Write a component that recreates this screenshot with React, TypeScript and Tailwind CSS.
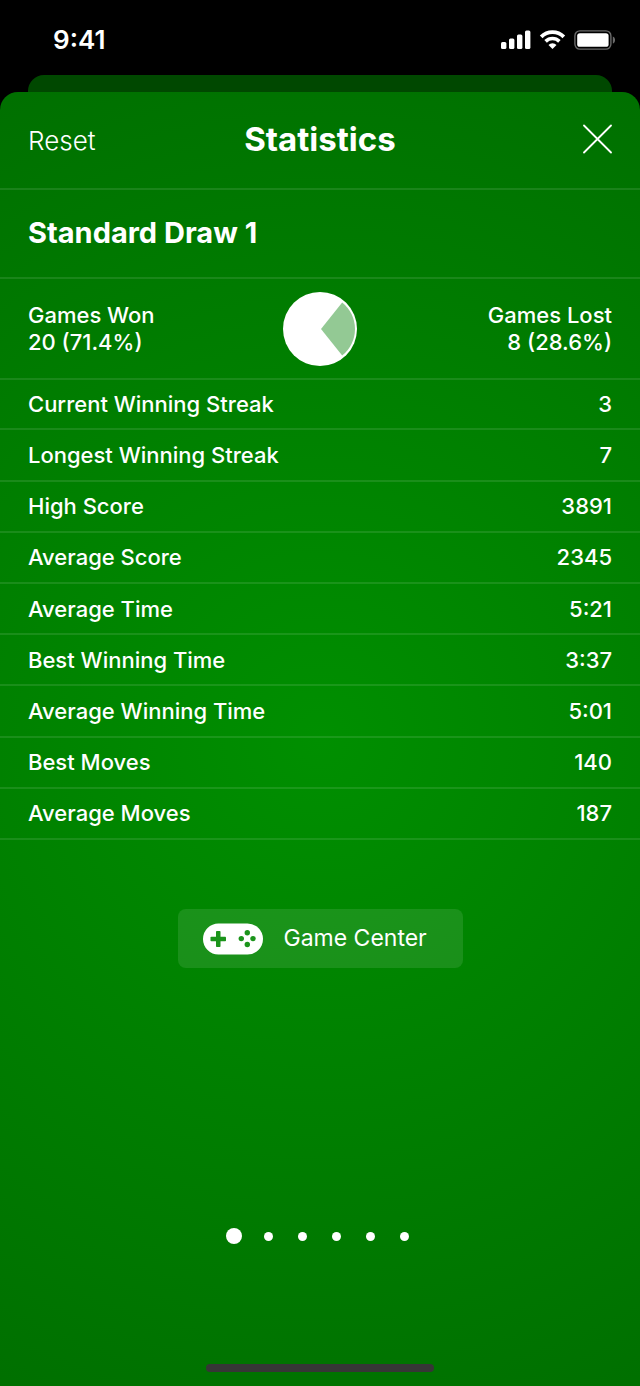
import React, { useState } from 'react';

interface StatRow {
  label: string;
  value: string;
}

const STATS: StatRow[] = [
  { label: 'Current Winning Streak', value: '3' },
  { label: 'Longest Winning Streak', value: '7' },
  { label: 'High Score', value: '3891' },
  { label: 'Average Score', value: '2345' },
  { label: 'Average Time', value: '5:21' },
  { label: 'Best Winning Time', value: '3:37' },
  { label: 'Average Winning Time', value: '5:01' },
  { label: 'Best Moves', value: '140' },
  { label: 'Average Moves', value: '187' },
];

const PAGES = 6;

const StatusBar: React.FC = () => (
  <div className="flex items-center justify-between h-[75px] pl-[53px] pr-[25px] pt-1">
    <span className="text-[26px] leading-8 font-semibold">9:41</span>
    <div className="flex items-center gap-2">
      <svg width="30" height="20" viewBox="0 0 30 20" fill="currentColor" aria-label="Signal">
        <rect x="0" y="12" width="5.4" height="7" rx="1.5" />
        <rect x="8" y="8.5" width="5.4" height="10.5" rx="1.5" />
        <rect x="16" y="4.5" width="5.4" height="14.5" rx="1.5" />
        <rect x="24" y="0.5" width="5.4" height="18.5" rx="1.5" />
      </svg>
      <svg width="27" height="20" viewBox="0 0 27 20" aria-label="Wi-Fi">
        <path d="M2.2 6.8a16 16 0 0 1 22.6 0" fill="none" stroke="currentColor" strokeWidth="3.8" />
        <path d="M6.6 11.4a9.8 9.8 0 0 1 13.8 0" fill="none" stroke="currentColor" strokeWidth="3.6" />
        <path d="M13.5 19l-4-4a5.7 5.7 0 0 1 8 0z" fill="currentColor" />
      </svg>
      <svg width="41" height="20" viewBox="0 0 41 20" aria-label="Battery">
        <rect x="0.9" y="0.9" width="36" height="18.2" rx="5" fill="none" stroke="#6a6a6a" strokeWidth="1.4" />
        <rect x="3.2" y="3.2" width="31.4" height="13.6" rx="2.6" fill="currentColor" />
        <path d="M38.8 6.5c3 1 3 6 0 7z" fill="#6a6a6a" />
      </svg>
    </div>
  </div>
);

const PieChart: React.FC<{ lost: number }> = ({ lost }) => {
  const half = lost * Math.PI;
  const dx = 34 * Math.cos(half);
  const dy = 34 * Math.sin(half);
  return (
    <svg className="shrink-0" width="74" height="74" viewBox="0 0 74 74" role="img" aria-label="Games won and lost">
      <circle cx="37" cy="37" r="37" fill="#fff" />
      <path d={`M38 37L${38 + dx} ${37 - dy}A34 34 0 0 1 ${38 + dx} ${37 + dy}Z`} fill="#93c994" />
    </svg>
  );
};

const GamepadIcon: React.FC = () => (
  <svg width="60" height="32" viewBox="0 0 60 32" aria-hidden="true">
    <rect x="0" y="0.5" width="60" height="31" rx="15.5" fill="#fff" />
    <g fill="#1b941b">
      <rect x="13" y="8" width="4.5" height="16" rx="0.8" />
      <rect x="7.5" y="13.8" width="15.5" height="4.5" rx="0.8" />
      <circle cx="44.3" cy="9.7" r="2.7" />
      <circle cx="44.3" cy="21.5" r="2.7" />
      <circle cx="38.3" cy="15.6" r="2.7" />
      <circle cx="50" cy="15.6" r="2.7" />
    </g>
  </svg>
);

const App: React.FC = () => {
  const [page, setPage] = useState(0);

  return (
    <div className="min-h-screen flex flex-col bg-black text-white font-['Inter','Liberation_Sans',sans-serif]">
      <StatusBar />
      <div className="h-[17px] mx-7 rounded-t-2xl bg-[#004800]" />

      <main className="flex-1 flex flex-col rounded-t-[18px] bg-[radial-gradient(circle_at_50%_50%,#008f00,#006e00_760px)]">
        <header className="grid grid-cols-3 items-center px-7 pt-[27px] pb-[29px] border-b-2 border-white/10">
          <button className="justify-self-start pt-1 text-[26px] leading-9 font-light">Reset</button>
          <h1 className="text-center text-[33px] leading-10 font-bold">Statistics</h1>
          <button className="justify-self-end" aria-label="Close">
            <svg width="29" height="30" viewBox="0 0 29 30" stroke="currentColor" strokeWidth="1.8" strokeLinecap="round">
              <path d="M1 1.5l27 27M28 1.5l-27 27" />
            </svg>
          </button>
        </header>

        <h2 className="px-7 pt-[25px] pb-[26px] text-[29px] leading-9 font-bold border-b-2 border-white/10">Standard Draw 1</h2>

        <section className="grid grid-cols-[1fr_auto_1fr] items-center px-7 pt-[13px] pb-3 text-[22px] leading-[27px] font-medium border-b-2 border-white/10">
          <p>Games Won<br />20 (71.4%)</p>
          <PieChart lost={0.286} />
          <p className="text-right">Games Lost<br />8 (28.6%)</p>
        </section>

        <table className="w-full h-[460px] text-[22px] leading-7 font-medium">
          <tbody>
            {STATS.map((row) => (
              <tr key={row.label} className="border-b-2 border-white/10">
                <th scope="row" className="pl-7 text-left font-medium">{row.label}</th>
                <td className="pr-7 text-right">{row.value}</td>
              </tr>
            ))}
          </tbody>
        </table>

        <button className="self-center mt-[69px] h-[59px] w-[285px] flex items-center gap-[21px] pl-[25px] rounded-lg bg-white/10 text-[23px]">
          <GamepadIcon />
          Game Center
        </button>

        <nav className="mt-auto flex justify-center items-center mb-[116px] pr-[2px]" aria-label="Pages">
          {Array.from({ length: PAGES }, (_, i) => (
            <button
              key={i}
              onClick={() => setPage(i)}
              aria-label={`Page ${i + 1}`}
              className="w-[34px] h-6 flex items-center justify-center"
            >
              <span className={`rounded-full bg-white ${i === page ? 'w-4 h-4' : 'w-[9px] h-[9px]'}`} />
            </button>
          ))}
        </nav>
        <div className="self-center w-[228px] h-2 mb-[14px] rounded-full bg-[#363636]" />
      </main>
    </div>
  );
};

export default App;
